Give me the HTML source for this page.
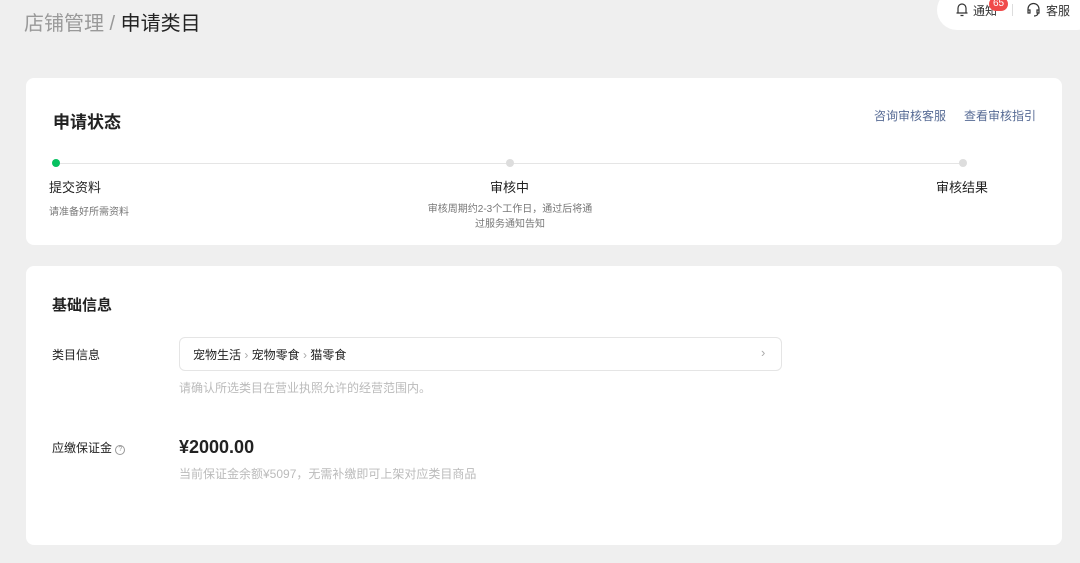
<!DOCTYPE html>
<html><head><meta charset="utf-8"><style>
*{margin:0;padding:0;box-sizing:border-box}
body{width:1080px;height:563px;background:#efefef;font-family:"Liberation Sans","Noto Sans CJK SC",sans-serif;position:relative;overflow:hidden;color:#222}
.abs{position:absolute;white-space:nowrap}
.card{position:absolute;left:26px;width:1036px;background:#fff;border-radius:8px}
</style></head><body>
<div class="abs" style="left:24px;top:7px;font-size:20px;color:#999">店铺管理 / <span style="color:#222">申请类目</span></div>
<div class="abs" style="left:937px;top:-10px;width:160px;height:40px;background:#fff;border-radius:20px"></div>
<svg class="abs" style="left:955px;top:2px" width="14" height="15" viewBox="0 0 14 15"><path d="M3 11V6a4 4 0 0 1 8 0v5M1.5 11h11M5.5 13.5h3" fill="none" stroke="#333" stroke-width="1.2"/></svg>
<div class="abs" style="left:973px;top:2px;font-size:12px;color:#333">通知</div>
<div class="abs" style="left:989px;top:-3px;background:#f04b4b;color:#fff;font-size:10px;border-radius:8px;padding:1px 4px;line-height:12px">65</div>
<div class="abs" style="left:1012px;top:4px;width:1px;height:12px;background:#ddd"></div>
<svg class="abs" style="left:1026px;top:2px" width="15" height="15" viewBox="0 0 15 15"><path d="M2 9V7a5.5 5.5 0 0 1 11 0v2M2 8h2v3H2zM11 8h2v3h-2zM12 11c0 2-2 3-4 3" fill="none" stroke="#333" stroke-width="1.2"/></svg>
<div class="abs" style="left:1046px;top:2px;font-size:12px;color:#333">客服</div>

<div class="card" style="top:78px;height:167px"></div>
<div class="abs" style="left:53px;top:108px;font-size:17px;font-weight:bold">申请状态</div>
<div class="abs" style="left:874px;top:107px;font-size:12px;color:#576b95">咨询审核客服</div>
<div class="abs" style="left:964px;top:107px;font-size:12px;color:#576b95">查看审核指引</div>
<div class="abs" style="left:56px;top:163px;width:907px;height:1px;background:#e5e5e5"></div>
<div class="abs" style="left:52px;top:159px;width:8px;height:8px;border-radius:50%;background:#07c160"></div>
<div class="abs" style="left:506px;top:159px;width:8px;height:8px;border-radius:50%;background:#ddd"></div>
<div class="abs" style="left:959px;top:159px;width:8px;height:8px;border-radius:50%;background:#ddd"></div>
<div class="abs" style="left:49px;top:177px;font-size:13px">提交资料</div>
<div class="abs" style="left:49px;top:203px;font-size:10px;color:#777">请准备好所需资料</div>
<div class="abs" style="left:490px;top:177px;font-size:13px">审核中</div>
<div class="abs" style="left:390px;top:202px;width:240px;text-align:center;font-size:10px;color:#777;line-height:15px;white-space:normal">审核周期约2-3个工作日，通过后将通<br>过服务通知告知</div>
<div class="abs" style="left:936px;top:177px;font-size:13px">审核结果</div>

<div class="card" style="top:266px;height:279px"></div>
<div class="abs" style="left:52px;top:294px;font-size:15px;font-weight:bold">基础信息</div>
<div class="abs" style="left:52px;top:346px;font-size:12px">类目信息</div>
<div class="abs" style="left:179px;top:337px;width:603px;height:34px;border:1px solid #e5e5e5;border-radius:6px"></div>
<div class="abs" style="left:193px;top:346px;font-size:12px">宠物生活 <span style="color:#aaa">›</span> 宠物零食 <span style="color:#aaa">›</span> 猫零食</div>
<div class="abs" style="left:761px;top:345px;font-size:13px;color:#aaa">›</div>
<div class="abs" style="left:179px;top:379px;font-size:12px;color:#bbb">请确认所选类目在营业执照允许的经营范围内。</div>
<div class="abs" style="left:52px;top:439px;font-size:12px">应缴保证金 <span style="display:inline-block;width:10px;height:10px;border:1px solid #999;border-radius:50%;font-size:7px;line-height:8px;text-align:center;color:#999;vertical-align:1px">?</span></div>
<div class="abs" style="left:179px;top:437px;font-size:18px;font-weight:bold">¥2000.00</div>
<div class="abs" style="left:179px;top:465px;font-size:12px;color:#bbb">当前保证金余额¥5097，无需补缴即可上架对应类目商品</div>
</body></html>
